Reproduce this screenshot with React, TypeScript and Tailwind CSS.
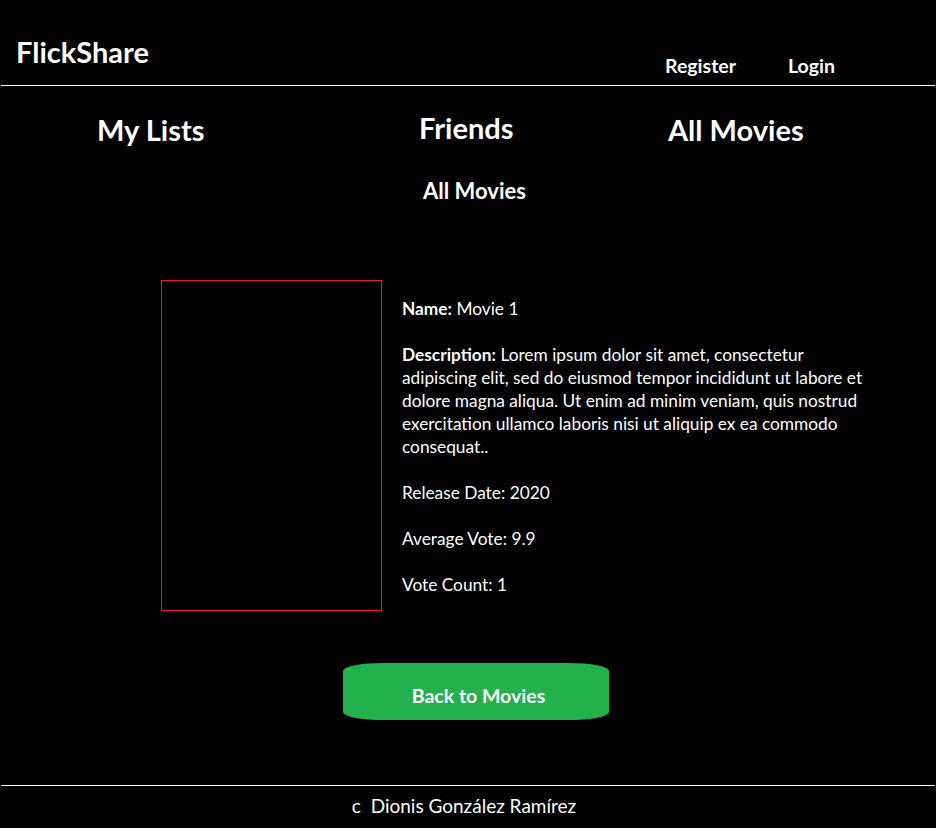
import React from 'react'

const font = { fontFamily: 'Lato, "Open Sans", sans-serif' }

export default function App() {
  return (
    <div className="min-h-[828px] w-full bg-black text-white" style={font}>
      {/* header */}
      <header className="mx-px flex h-[86px] items-start justify-between border-b border-white">
        <div className="pl-[15px] pt-[37px] text-[29px] font-bold leading-none">FlickShare</div>
        <nav className="flex gap-[52px] pr-[100px] pt-[56px] text-[19.5px] font-bold leading-none">
          <a href="#">Register</a>
          <a href="#">Login</a>
        </nav>
      </header>

      {/* section links */}
      <div className="flex pl-[97px] pt-[27px] text-[29px] font-bold leading-none">
        <a href="#" className="w-[322px] pt-[2px]">My Lists</a>
        <a href="#" className="w-[249px]">Friends</a>
        <a href="#" className="pt-[2px]">All Movies</a>
      </div>

      <h2 className="mt-[36px] text-center text-[22px] font-bold leading-[22px]">
        <span className="ml-[13px]">All Movies</span>
      </h2>

      {/* movie detail */}
      <div className="mt-[78px] flex pl-[161px]">
        <div className="h-[331px] w-[221px] shrink-0 border border-[#ed1c24]" />
        <div className="ml-[20px] w-[520px] pt-[17px] text-[17.3px] leading-[23px]">
          <p><b>Name:</b> Movie 1</p>
          <p className="mt-[23px]">
            <b>Description:</b> Lorem ipsum dolor sit amet, consectetur
            <br />
            adipiscing elit, sed do eiusmod tempor incididunt ut labore et
            <br />
            dolore magna aliqua. Ut enim ad minim veniam, quis nostrud
            <br />
            exercitation ullamco laboris nisi ut aliquip ex ea commodo
            <br />
            consequat..
          </p>
          <p className="mt-[23px]">Release Date: 2020</p>
          <p className="mt-[23px]">Average Vote: 9.9</p>
          <p className="mt-[23px]">Vote Count: 1</p>
        </div>
      </div>

      <div className="mt-[52px] flex pl-[343px]">
        <button className="h-[57px] w-[266px] rounded-[40px/8px] bg-[#22b14c] pl-[5px] pt-[8px] text-[19.5px] font-bold text-white">
          Back to Movies
        </button>
      </div>

      {/* footer */}
      <footer className="mx-px mt-[65px] border-t border-white pt-[9px] text-center text-[19px] leading-[22px]">
        <span className="ml-[-8px]">c&nbsp; Dionis González Ramírez</span>
      </footer>
    </div>
  )
}
